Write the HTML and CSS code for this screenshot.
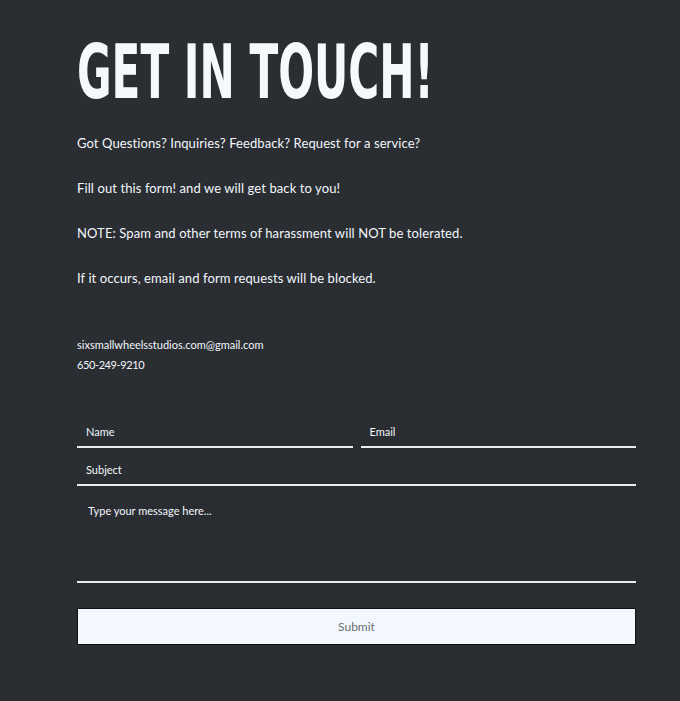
FILE: index.html
```html
<!DOCTYPE html>
<html>
<head>
<meta charset="utf-8">
<link rel="stylesheet" href="styles.css">
</head>
<body>
<main class="page">
  <h1 class="title"><span class="title-text">GET IN TOUCH!</span></h1>
  <div class="intro">
    <p>Got Questions? Inquiries? Feedback? Request for a service?</p>
    <p>Fill out this form! and we will get back to you!</p>
    <p>NOTE: Spam and other terms of harassment will NOT be tolerated.</p>
    <p>If it occurs, email and form requests will be blocked.</p>
  </div>
  <div class="contact">
    <p>sixsmallwheelsstudios.com@gmail.com</p>
    <p class="phone">650-249-9210</p>
  </div>
  <form class="form">
    <div class="row">
      <div class="field"><span class="ph">Name</span></div>
      <div class="field"><span class="ph">Email</span></div>
    </div>
    <div class="field"><span class="ph">Subject</span></div>
    <div class="field area"><span class="ph">Type your message here...</span></div>
    <div class="submit">Submit</div>
  </form>
</main>
</body>
</html>
```
FILE: styles.css
```css
html, body {
  margin: 0;
  padding: 0;
  background: #2a2e33;
}
.page {
  padding: 32px 0 0 77px;
  width: 559px;
  font-family: "Lato", "Noto Sans", sans-serif;
  color: #f2f7fb;
}
.title {
  margin: 0;
  font-family: "DejaVu Sans Condensed", "DejaVu Sans", sans-serif;
  font-weight: 700;
  font-size: 75px;
  line-height: 80px;
  color: #f4f9fd;
  white-space: nowrap;
}
.title-text {
  display: inline-block;
  transform: scaleX(0.625);
  transform-origin: left center;
}
.intro {
  margin-top: 22px;
  display: flex;
  flex-direction: column;
  gap: 27px;
}
.intro p {
  margin: 0;
  font-size: 13px;
  line-height: 18px;
  letter-spacing: 0.1px;
}
.contact {
  margin-top: 49px;
  display: flex;
  flex-direction: column;
  gap: 2px;
}
.contact p {
  margin: 0;
  font-size: 11px;
  line-height: 18px;
}
.contact .phone {
  letter-spacing: -0.4px;
}
.form {
  margin-top: 38px;
  display: flex;
  flex-direction: column;
  gap: 2px;
}
.row {
  display: flex;
  gap: 8px;
}
.row .field {
  flex: 1;
}
.field {
  height: 36px;
  border-bottom: 2px solid #e8edf1;
  box-sizing: border-box;
  padding: 8px 0 0 9px;
  background: #2a2e33;
}
.field.area {
  height: 95px;
  padding: 11px 0 0 11px;
  background: #292d31;
}
.ph {
  font-size: 11px;
  line-height: 14px;
  color: #f2f7fb;
}
.submit {
  margin-top: 23px;
  height: 37px;
  background: #f2f8fd;
  border: 1px solid #111;
  box-sizing: border-box;
  display: flex;
  align-items: center;
  justify-content: center;
  font-size: 12px;
  color: #6b6f73;
}
```
